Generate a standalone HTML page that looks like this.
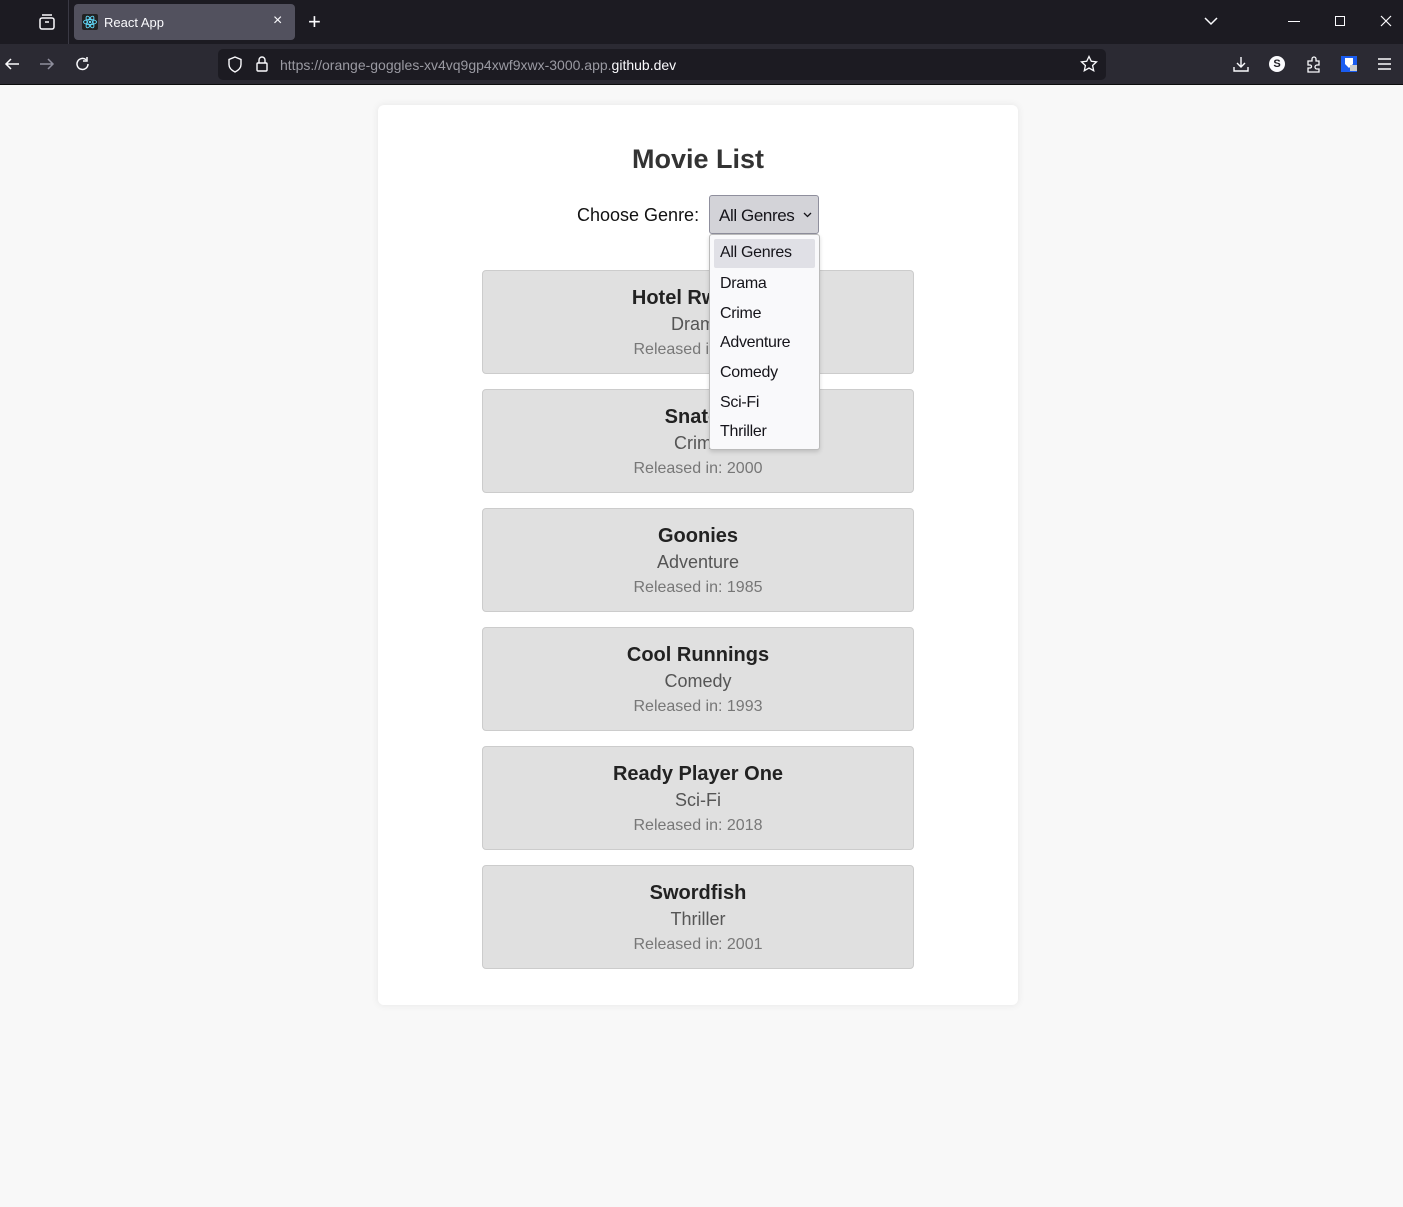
<!DOCTYPE html>
<html><head><meta charset="utf-8"><style>
*{box-sizing:border-box;margin:0;padding:0}
body{width:1403px;height:1207px;background:#f8f8f8;font-family:"Liberation Sans",Arial,sans-serif;position:relative;overflow:hidden}
.tabbar{position:absolute;left:0;top:0;width:1403px;height:44px;background:#1c1b22}
.nav{position:absolute;left:0;top:44px;width:1403px;height:41px;background:#2b2a33;border-bottom:1px solid #0c0c0d}
.tab{position:absolute;left:74px;top:4px;width:221px;height:36px;background:#52515e;border-radius:4px;color:#fbfbfe;font-size:13px}
.url{position:absolute;left:218px;top:49px;width:888px;height:31px;background:#1c1b22;border-radius:5px;color:#9a9aa2;font-size:14px}
.ico{position:absolute;color:#fbfbfe}
.card{position:absolute;left:378px;top:105px;width:640px;height:900px;background:#fff;border-radius:6px;box-shadow:0 0 8px rgba(0,0,0,.08)}
.m{position:absolute;left:482px;width:432px;height:104px;background:#e0e0e0;border:1px solid #ccc;border-radius:4px;text-align:center}
.m b{position:absolute;left:0;right:0;top:16px;font-size:20px;color:#222}
.m .g{position:absolute;left:0;right:0;top:43px;font-size:18px;color:#555}
.m .r{position:absolute;left:0;right:0;top:70px;font-size:16px;color:#777}
.dd{position:absolute;left:709px;top:234px;width:111px;height:216px;background:#f9f9fb;border:1px solid #bbb;border-radius:3px;box-shadow:0 2px 4px rgba(0,0,0,.15)}
.dd div{position:absolute;left:10px;font-size:16px;color:#15141a;letter-spacing:-.3px}
</style></head><body>
<div class="tabbar"></div>
<div style="position:absolute;left:68px;top:0;width:1px;height:44px;background:#3a3944"></div>
<svg class="ico" style="left:38px;top:13px" width="18" height="18" viewBox="0 0 18 18" fill="none" stroke="#fbfbfe" stroke-width="1.5"><rect x="2" y="5" width="14" height="11" rx="2"/><path d="M4 2h10M7 9h4"/></svg>
<div class="tab"><svg style="position:absolute;left:8px;top:10px" width="16" height="16" viewBox="0 0 16 16"><rect width="16" height="16" rx="2" fill="#222"/><g fill="none" stroke="#61dafb" stroke-width=".9"><ellipse cx="8" cy="8" rx="6.5" ry="2.5"/><ellipse cx="8" cy="8" rx="6.5" ry="2.5" transform="rotate(60 8 8)"/><ellipse cx="8" cy="8" rx="6.5" ry="2.5" transform="rotate(120 8 8)"/></g><circle cx="8" cy="8" r="1.2" fill="#61dafb"/></svg><span style="position:absolute;left:30px;top:11px">React App</span><span style="position:absolute;left:199px;top:8px;font-size:16px">×</span></div>
<span class="ico" style="left:308px;top:9px;font-size:22px">+</span>
<svg class="ico" style="left:1203px;top:15px" width="16" height="12"><path d="M2 3l6 6 6-6" stroke="#fbfbfe" stroke-width="1.5" fill="none"/></svg>
<div class="ico" style="left:1288px;top:21px;width:12px;height:1px;background:#fbfbfe"></div>
<div class="ico" style="left:1335px;top:16px;width:10px;height:10px;border:1px solid #fbfbfe"></div>
<svg class="ico" style="left:1380px;top:15px" width="12" height="12"><path d="M1 1l10 10M11 1L1 11" stroke="#fbfbfe" stroke-width="1.2"/></svg>
<div class="nav"></div>
<svg class="ico" style="left:3px;top:56px" width="18" height="16"><path d="M16 8H3M8 3L3 8l5 5" stroke="#fbfbfe" stroke-width="1.5" fill="none"/></svg>
<svg class="ico" style="left:38px;top:56px" width="18" height="16"><path d="M2 8h13M10 3l5 5-5 5" stroke="#8f8f9d" stroke-width="1.5" fill="none"/></svg>
<svg class="ico" style="left:74px;top:55px" width="18" height="18"><path d="M14 9a5.5 5.5 0 1 1-2-4.3M13 2v4h-4" stroke="#fbfbfe" stroke-width="1.5" fill="none"/></svg>
<div class="url"><svg style="position:absolute;left:8px;top:6px" width="18" height="19"><path d="M9 2l6 2.5v5c0 4-3 6-6 7.5-3-1.5-6-3.5-6-7.5v-5z" stroke="#fbfbfe" stroke-width="1.4" fill="none"/></svg><svg style="position:absolute;left:37px;top:6px" width="14" height="18"><rect x="2" y="8" width="10" height="8" rx="1" stroke="#fbfbfe" stroke-width="1.4" fill="none"/><path d="M4 8V5a3 3 0 0 1 6 0v3" stroke="#fbfbfe" stroke-width="1.4" fill="none"/></svg><span style="position:absolute;left:62px;top:8px">https://orange-goggles-xv4vq9gp4xwf9xwx-3000.app.<span style="color:#fbfbfe">github.dev</span></span><svg style="position:absolute;left:862px;top:6px" width="18" height="18"><path d="M9 1.5l2.3 4.8 5.2.6-3.9 3.6 1.1 5.2L9 13l-4.7 2.7 1.1-5.2-3.9-3.6 5.2-.6z" stroke="#fbfbfe" stroke-width="1.3" fill="none"/></svg></div>
<svg class="ico" style="left:1232px;top:55px" width="18" height="18"><path d="M9 2v10M5 8l4 4 4-4M2 12v4h14v-4" stroke="#fbfbfe" stroke-width="1.4" fill="none"/></svg>
<div class="ico" style="left:1269px;top:56px;width:16px;height:16px;border-radius:50%;background:#fbfbfe;color:#1c1b22;font-size:11px;font-weight:bold;text-align:center;line-height:16px">S</div>
<svg class="ico" style="left:1305px;top:55px" width="18" height="18"><path d="M3 6h4V4a2 2 0 0 1 4 0v2h3v4h-2a2 2 0 0 0 0 4h2v3H3v-4h2a1.5 1.5 0 0 0 0-3H3z" stroke="#fbfbfe" stroke-width="1.3" fill="none"/></svg>
<svg class="ico" style="left:1341px;top:55px" width="18" height="18"><rect x="0" y="1" width="16" height="16" fill="#1a5cf0"/><path d="M4 3h8v6l-4 4-4-4z" fill="#fff"/><rect x="9" y="10" width="7" height="6" fill="#ccc"/></svg>
<svg class="ico" style="left:1377px;top:57px" width="16" height="14"><path d="M1 2h13M1 7h13M1 12h13" stroke="#fbfbfe" stroke-width="1.4"/></svg>

<div class="card"></div>
<div style="position:absolute;left:378px;width:640px;top:144px;text-align:center;font-size:27px;font-weight:bold;color:#333">Movie List</div>
<div style="position:absolute;left:577px;top:205px;font-size:18px;color:#111">Choose Genre:</div>
<div style="position:absolute;left:709px;top:195px;width:110px;height:39px;background:#d3d3d8;border:1px solid #8f8f9d;border-radius:3px;font-size:17px;color:#15141a;letter-spacing:-.4px"><span style="position:absolute;left:9px;top:10px">All Genres</span><svg style="position:absolute;left:93px;top:16px" width="9" height="6"><path d="M1 1l3.5 3.5L8 1" stroke="#15141a" stroke-width="1.3" fill="none"/></svg></div>

<div class="m" style="top:270px"><b>Hotel Rwanda</b><div class="g">Drama</div><div class="r">Released in: 2004</div></div>
<div class="m" style="top:389px"><b>Snatch</b><div class="g">Crime</div><div class="r">Released in: 2000</div></div>
<div class="m" style="top:508px"><b>Goonies</b><div class="g">Adventure</div><div class="r">Released in: 1985</div></div>
<div class="m" style="top:627px"><b>Cool Runnings</b><div class="g">Comedy</div><div class="r">Released in: 1993</div></div>
<div class="m" style="top:746px"><b>Ready Player One</b><div class="g">Sci-Fi</div><div class="r">Released in: 2018</div></div>
<div class="m" style="top:865px"><b>Swordfish</b><div class="g">Thriller</div><div class="r">Released in: 2001</div></div>

<div class="dd">
<div style="left:4px;top:4px;width:101px;height:29px;background:#e0e0e6;border-radius:2px"></div>
<div style="top:9px">All Genres</div>
<div style="top:40px">Drama</div>
<div style="top:70px">Crime</div>
<div style="top:99px">Adventure</div>
<div style="top:129px">Comedy</div>
<div style="top:159px">Sci-Fi</div>
<div style="top:188px">Thriller</div>
</div>
</body></html>
